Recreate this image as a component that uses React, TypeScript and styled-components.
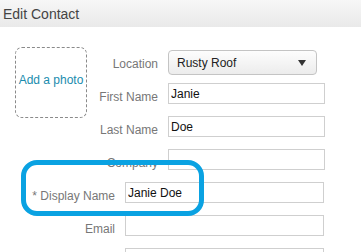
import styled, { createGlobalStyle } from 'styled-components';

const GlobalStyle = createGlobalStyle`
  body {
    margin: 0;
    background: #fff;
    font-family: 'Liberation Sans', Arial, sans-serif;
  }
`;

export default function App() {
  return (
    <Page>
      <GlobalStyle />
      <Header>Edit Contact</Header>
      <Body>
        <TopSection>
          <PhotoBox>Add a photo</PhotoBox>
          <Fields>
            <Row $mb={8}>
              <Label $width={70}>Location</Label>
              <Select>
                <span>Rusty Roof</span>
                <Caret />
              </Select>
            </Row>
            <Row>
              <Label $width={70}>First Name</Label>
              <Input $width={157} defaultValue="Janie" />
            </Row>
            <Row>
              <Label $width={70}>Last Name</Label>
              <Input $width={157} defaultValue="Doe" />
            </Row>
            <Row>
              <Label $width={70}>Company</Label>
              <Input $width={157} defaultValue="" />
            </Row>
          </Fields>
        </TopSection>
        <BottomSection>
          <Row>
            <Label $width={100}>* Display Name</Label>
            <Input $width={199} defaultValue="Janie Doe" />
          </Row>
          <Row>
            <Label $width={100}>Email</Label>
            <Input $width={199} defaultValue="" />
          </Row>
          <Row>
            <Label $width={100}></Label>
            <Input $width={199} defaultValue="" />
          </Row>
        </BottomSection>
        <Highlight />
      </Body>
    </Page>
  );
}

const Page = styled.div`
  width: 361px;
  height: 252px;
  overflow: hidden;
  background: #fff;
`;

const Header = styled.div`
  height: 27px;
  padding-left: 3px;
  box-sizing: border-box;
  display: flex;
  align-items: center;
  font-size: 14px;
  color: #444;
  background: linear-gradient(#f7f7f7, #e9e9e9);
`;

const Body = styled.div`
  position: relative;
  padding-top: 20px;
`;

const TopSection = styled.div`
  display: flex;
  align-items: flex-start;
  padding-left: 15px;
`;

const PhotoBox = styled.div`
  width: 72px;
  height: 71px;
  box-sizing: border-box;
  padding-bottom: 5px;
  border: 1px dashed #8a8a8a;
  border-radius: 7px;
  display: flex;
  align-items: center;
  justify-content: center;
  font-size: 12px;
  color: #1a8cae;
`;

const Fields = styled.div`
  display: flex;
  flex-direction: column;
  margin: 3px 0 0 1px;
`;

const Row = styled.div<{ $mb?: number }>`
  display: flex;
  align-items: flex-start;
  margin-bottom: ${(p) => p.$mb ?? 12}px;
`;

const Label = styled.div<{ $width: number }>`
  width: ${(p) => p.$width}px;
  height: 21px;
  box-sizing: border-box;
  padding-top: 7px;
  margin-right: 10px;
  text-align: right;
  line-height: 15px;
  font-size: 12px;
  color: #777;
  white-space: nowrap;
`;

const Select = styled.div`
  width: 149px;
  height: 25px;
  box-sizing: border-box;
  border: 1px solid #c4c4c4;
  border-radius: 4px;
  background: linear-gradient(#fdfdfd, #ececec);
  display: flex;
  align-items: center;
  justify-content: space-between;
  padding: 0 10px 0 8px;
  font-size: 12px;
  color: #222;
`;

const Caret = styled.span`
  width: 0;
  height: 0;
  border-left: 4px solid transparent;
  border-right: 4px solid transparent;
  border-top: 6px solid #333;
  margin-top: 1px;
`;

const Input = styled.input<{ $width: number }>`
  width: ${(p) => p.$width}px;
  height: 21px;
  box-sizing: border-box;
  border: 1px solid #cfcfcf;
  border-radius: 0;
  padding: 0 2px;
  margin: 0;
  font-family: 'Liberation Sans', Arial, sans-serif;
  font-size: 12px;
  color: #111;
  background: #fff;
  outline: none;
`;

const BottomSection = styled.div`
  display: flex;
  flex-direction: column;
  padding-left: 15px;
`;

const Highlight = styled.div`
  position: absolute;
  left: 21px;
  top: 133px;
  width: 183px;
  height: 56px;
  box-sizing: border-box;
  border: 5px solid #0aa2e2;
  border-radius: 16px;
  pointer-events: none;
`;
